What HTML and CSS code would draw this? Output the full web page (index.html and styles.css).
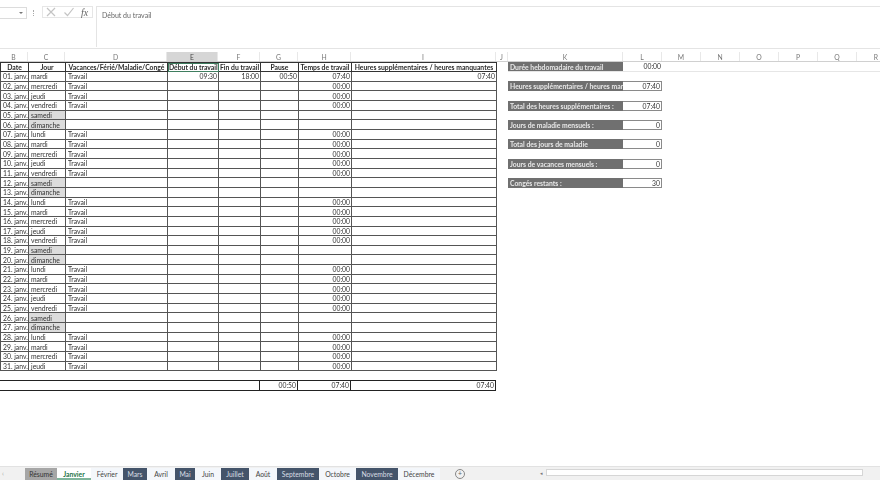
FILE: index.html
```html
<!DOCTYPE html>
<html lang="fr">
<head>
    <meta charset="utf-8">
    <title>Feuille de temps</title>
    <link rel="stylesheet" href="styles.css">
</head>
<body>
    <div class="formula-bar">
        <div class="name-box"><span class="name-arrow"></span></div>
        <div class="grip"></div>
        <div class="fx-buttons">
            <svg width="12" height="10" viewBox="0 0 12 10"><path d="M2 1l8 8M10 1L2 9" stroke="#c4c4c4" stroke-width="1.2" fill="none"/></svg>
            <svg width="12" height="10" viewBox="0 0 12 10"><path d="M1.5 5.5l3 3L10.5 1" stroke="#c4c4c4" stroke-width="1.2" fill="none"/></svg>
            <span class="fx">fx</span>
        </div>
        <div class="formula-text">Début du travail</div>
    </div>

    <div class="col-letters">
        <span class="w-b">B</span><span class="w-c">C</span><span class="w-d">D</span><span class="w-e active">E</span><span class="w-f">F</span><span class="w-g">G</span><span class="w-h">H</span><span class="w-i">I</span><span class="w-j">J</span><span class="w-k">K</span><span class="w-l">L</span><span class="w-m">M</span><span class="w-m">N</span><span class="w-m">O</span><span class="w-m">P</span><span class="w-m">Q</span><span class="w-m">R</span>
    </div>

    <div class="sheet">
        <div class="month">
            <table class="days">
                <colgroup><col class="w-b"><col class="w-c"><col class="w-d"><col class="w-e"><col class="w-f"><col class="w-g"><col class="w-h"><col class="w-i"></colgroup>
                <tr class="head"><th>Date</th><th>Jour</th><th>Vacances/Férié/Maladie/Congé</th><th class="selected">Début du travail</th><th>Fin du travail</th><th>Pause</th><th>Temps de travail</th><th>Heures supplémentaires / heures manquantes</th></tr>
                <tr><td>01. janv.</td><td>mardi</td><td>Travail</td><td class="num">09:30</td><td class="num">18:00</td><td class="num">00:50</td><td class="num">07:40</td><td class="num">07:40</td></tr>
                <tr><td>02. janv.</td><td>mercredi</td><td>Travail</td><td></td><td></td><td></td><td class="num">00:00</td><td></td></tr>
                <tr><td>03. janv.</td><td>jeudi</td><td>Travail</td><td></td><td></td><td></td><td class="num">00:00</td><td></td></tr>
                <tr><td>04. janv.</td><td>vendredi</td><td>Travail</td><td></td><td></td><td></td><td class="num">00:00</td><td></td></tr>
                <tr><td>05. janv.</td><td class="off">samedi</td><td></td><td></td><td></td><td></td><td></td><td></td></tr>
                <tr><td>06. janv.</td><td class="off">dimanche</td><td></td><td></td><td></td><td></td><td></td><td></td></tr>
                <tr><td>07. janv.</td><td>lundi</td><td>Travail</td><td></td><td></td><td></td><td class="num">00:00</td><td></td></tr>
                <tr><td>08. janv.</td><td>mardi</td><td>Travail</td><td></td><td></td><td></td><td class="num">00:00</td><td></td></tr>
                <tr><td>09. janv.</td><td>mercredi</td><td>Travail</td><td></td><td></td><td></td><td class="num">00:00</td><td></td></tr>
                <tr><td>10. janv.</td><td>jeudi</td><td>Travail</td><td></td><td></td><td></td><td class="num">00:00</td><td></td></tr>
                <tr><td>11. janv.</td><td>vendredi</td><td>Travail</td><td></td><td></td><td></td><td class="num">00:00</td><td></td></tr>
                <tr><td>12. janv.</td><td class="off">samedi</td><td></td><td></td><td></td><td></td><td></td><td></td></tr>
                <tr><td>13. janv.</td><td class="off">dimanche</td><td></td><td></td><td></td><td></td><td></td><td></td></tr>
                <tr><td>14. janv.</td><td>lundi</td><td>Travail</td><td></td><td></td><td></td><td class="num">00:00</td><td></td></tr>
                <tr><td>15. janv.</td><td>mardi</td><td>Travail</td><td></td><td></td><td></td><td class="num">00:00</td><td></td></tr>
                <tr><td>16. janv.</td><td>mercredi</td><td>Travail</td><td></td><td></td><td></td><td class="num">00:00</td><td></td></tr>
                <tr><td>17. janv.</td><td>jeudi</td><td>Travail</td><td></td><td></td><td></td><td class="num">00:00</td><td></td></tr>
                <tr><td>18. janv.</td><td>vendredi</td><td>Travail</td><td></td><td></td><td></td><td class="num">00:00</td><td></td></tr>
                <tr><td>19. janv.</td><td class="off">samedi</td><td></td><td></td><td></td><td></td><td></td><td></td></tr>
                <tr><td>20. janv.</td><td class="off">dimanche</td><td></td><td></td><td></td><td></td><td></td><td></td></tr>
                <tr><td>21. janv.</td><td>lundi</td><td>Travail</td><td></td><td></td><td></td><td class="num">00:00</td><td></td></tr>
                <tr><td>22. janv.</td><td>mardi</td><td>Travail</td><td></td><td></td><td></td><td class="num">00:00</td><td></td></tr>
                <tr><td>23. janv.</td><td>mercredi</td><td>Travail</td><td></td><td></td><td></td><td class="num">00:00</td><td></td></tr>
                <tr><td>24. janv.</td><td>jeudi</td><td>Travail</td><td></td><td></td><td></td><td class="num">00:00</td><td></td></tr>
                <tr><td>25. janv.</td><td>vendredi</td><td>Travail</td><td></td><td></td><td></td><td class="num">00:00</td><td></td></tr>
                <tr><td>26. janv.</td><td class="off">samedi</td><td></td><td></td><td></td><td></td><td></td><td></td></tr>
                <tr><td>27. janv.</td><td class="off">dimanche</td><td></td><td></td><td></td><td></td><td></td><td></td></tr>
                <tr><td>28. janv.</td><td>lundi</td><td>Travail</td><td></td><td></td><td></td><td class="num">00:00</td><td></td></tr>
                <tr><td>29. janv.</td><td>mardi</td><td>Travail</td><td></td><td></td><td></td><td class="num">00:00</td><td></td></tr>
                <tr><td>30. janv.</td><td>mercredi</td><td>Travail</td><td></td><td></td><td></td><td class="num">00:00</td><td></td></tr>
                <tr><td>31. janv.</td><td>jeudi</td><td>Travail</td><td></td><td></td><td></td><td class="num">00:00</td><td></td></tr>
            </table>
            <div class="totals">
                <div class="total-fill"></div>
                <div class="total w-g">00:50</div>
                <div class="total w-h">07:40</div>
                <div class="total w-i">07:40</div>
            </div>
        </div>

        <div class="summary">
            <div class="stat first"><div class="stat-label">Durée hebdomadaire du travail</div><div class="stat-value">00:00</div></div>
            <div class="stat"><div class="stat-label">Heures supplémentaires / heures manquantes</div><div class="stat-value">07:40</div></div>
            <div class="stat"><div class="stat-label">Total des heures supplémentaires :</div><div class="stat-value">07:40</div></div>
            <div class="stat"><div class="stat-label">Jours de maladie mensuels :</div><div class="stat-value">0</div></div>
            <div class="stat"><div class="stat-label">Total des jours de maladie</div><div class="stat-value">0</div></div>
            <div class="stat"><div class="stat-label">Jours de vacances mensuels :</div><div class="stat-value">0</div></div>
            <div class="stat"><div class="stat-label">Congés restants :</div><div class="stat-value">30</div></div>
        </div>
    </div>

    <div class="tab-bar">
        <span class="tab-prev">‹</span>
        <div class="tab grey t32">Résumé</div>
        <div class="tab current t34">Janvier</div>
        <div class="tab t32">Février</div>
        <div class="tab navy t24">Mars</div>
        <div class="tab t28">Avril</div>
        <div class="tab navy t20">Mai</div>
        <div class="tab t26">Juin</div>
        <div class="tab navy t28">Juillet</div>
        <div class="tab t28">Août</div>
        <div class="tab navy t42">Septembre</div>
        <div class="tab t37">Octobre</div>
        <div class="tab navy t42">Novembre</div>
        <div class="tab t42">Décembre</div>
        <div class="add-sheet">+</div>
        <div class="scroll-left">◂</div>
        <div class="scroll-track"></div>
    </div>
</body>
</html>
```

FILE: styles.css
```css
body {
    margin: 0;
    width: 880px;
    height: 480px;
    overflow: hidden;
    position: relative;
    background-color: #fff;
    font-family: "Lato", "Liberation Sans", sans-serif;
    font-size: 6.8px;
    color: #333;
    filter: blur(0.35px);
}

/* formula bar */
.formula-bar {
    display: flex;
    align-items: flex-start;
    height: 42px;
    padding-top: 6px;
    border-bottom: 1px solid #e4e4e4;
    margin-bottom: 3px;
}
.name-box {
    width: 26px;
    height: 10px;
    margin-top: 1px;
    border: 1px solid #dcdcdc;
    border-left: none;
    position: relative;
}
.name-arrow {
    position: absolute;
    right: 3px;
    top: 4px;
    border: 2px solid transparent;
    border-top: 2px solid #777;
}
.grip {
    width: 1px;
    height: 6px;
    margin: 4px 0 0 6px;
    border-left: 1px dotted #aaa;
}
.fx-buttons {
    display: flex;
    align-items: center;
    gap: 6px;
    width: 51px;
    height: 12px;
    margin-left: 7px;
    padding-left: 2px;
    box-sizing: border-box;
    border: 1px solid #e6e6e6;
}
.fx {
    font-family: "Liberation Serif", serif;
    font-style: italic;
    font-size: 10px;
    color: #666;
}
.formula-text {
    flex: 1;
    height: 41px;
    padding: 4px 0 0 5px;
    margin-left: 3px;
    box-sizing: border-box;
    border-left: 1px solid #e4e4e4;
    border-top: 1px solid #e4e4e4;
    font-size: 7px;
    color: #666;
}

/* column widths */
.w-b { width: 28px; }
.w-c { width: 37px; }
.w-d { width: 102px; }
.w-e { width: 51px; }
.w-f { width: 42px; }
.w-g { width: 38px; }
.w-h { width: 53px; }
.w-i { width: 145px; }
.w-j { width: 12px; }
.w-k { width: 115px; }
.w-l { width: 39px; }
.w-m { width: 39px; }

.col-letters {
    display: flex;
    height: 10px;
    line-height: 10px;
    text-align: center;
    color: #777;
    border-bottom: 1px solid #d0d0d0;
    box-sizing: border-box;
}
.col-letters span {
    flex: none;
    box-sizing: border-box;
    border-right: 1px solid #e8e8e8;
}
.col-letters .active {
    background-color: #d6d6d6;
    color: #444;
}

/* main table */
.sheet {
    display: flex;
}
.month {
    width: 496px;
    flex: none;
}
.days {
    width: 496px;
    table-layout: fixed;
    border-collapse: collapse;
}
.days tr {
    height: 9.66px;
}
.days .head {
    height: 9px;
}
.days th, .days td {
    padding: 0 1px 0 2px;
    border: 1px solid #555;
    white-space: nowrap;
    overflow: hidden;
    line-height: 8px;
    font-weight: normal;
    text-align: left;
}
.days th {
    padding: 0 1px;
    font-weight: bold;
    text-align: center;
    border-color: #333;
    color: #2b2b2b;
}
.days .selected {
    outline: 1px solid #3f7d5f;
    outline-offset: -1px;
}
.days .num {
    text-align: right;
}
.days .off {
    background-color: #dcdcdc;
}

.totals {
    display: flex;
    height: 9px;
    margin-top: 9px;
    border: 1px solid #222;
    border-width: 1px 1px 1px 0;
}
.total-fill {
    flex: 1;
}
.total {
    flex: none;
    box-sizing: border-box;
    border-left: 1px solid #222;
    text-align: right;
    line-height: 9px;
    padding-right: 1px;
}

/* summary on the right */
.summary {
    flex: 1;
    margin-left: 12px;
}
.stat {
    display: flex;
    height: 10px;
    box-sizing: border-box;
    margin-top: 9.33px;
}
.stat.first {
    margin-top: 0;
    border-bottom: 1px solid #e6e6e6;
}
.stat-label {
    width: 115px;
    flex: none;
    box-sizing: border-box;
    padding-left: 2px;
    overflow: hidden;
    white-space: nowrap;
    background-color: #707070;
    color: #e8e8e8;
    font-weight: bold;
    line-height: 10px;
}
.stat-value {
    width: 39px;
    flex: none;
    box-sizing: border-box;
    padding-right: 1px;
    text-align: right;
    line-height: 8px;
    border: 1px solid #8a8a8a;
    border-left: none;
}
.stat.first .stat-value {
    border: none;
}

/* sheet tabs */
.tab-bar {
    position: absolute;
    left: 0;
    right: 0;
    bottom: 0;
    height: 14px;
    display: flex;
    align-items: stretch;
    background-color: #f1f1f1;
    border-top: 1px solid #e2e2e2;
    box-sizing: border-box;
    line-height: 13px;
}
.tab-prev {
    width: 25px;
    padding-left: 2px;
    box-sizing: border-box;
    color: #aaa;
}
.tab {
    text-align: center;
    background-color: #f4f7fb;
    color: #444;
    margin-top: 1px;
}
.tab.grey {
    background-color: #a6a6a6;
    color: #333;
}
.tab.navy {
    background-color: #44546a;
    color: #d8dde4;
}
.tab.current {
    background-color: #fff;
    color: #217346;
    font-weight: bold;
    border-bottom: 2px solid #7fb59b;
}
.t20 { width: 20px; }
.t24 { width: 24px; }
.t26 { width: 26px; }
.t28 { width: 28px; }
.t32 { width: 32px; }
.t34 { width: 34px; }
.t37 { width: 37px; }
.t42 { width: 42px; }

.add-sheet {
    width: 8px;
    height: 8px;
    margin: 2px 0 0 15px;
    border: 1px solid #888;
    border-radius: 50%;
    line-height: 7px;
    text-align: center;
    color: #666;
}
.scroll-left {
    width: 6px;
    margin-left: 75px;
    font-size: 5px;
    color: #777;
}
.scroll-track {
    width: 317px;
    height: 7px;
    margin-top: 2px;
    background-color: #fff;
    border: 1px solid #d6d6d6;
    box-sizing: border-box;
}
```
